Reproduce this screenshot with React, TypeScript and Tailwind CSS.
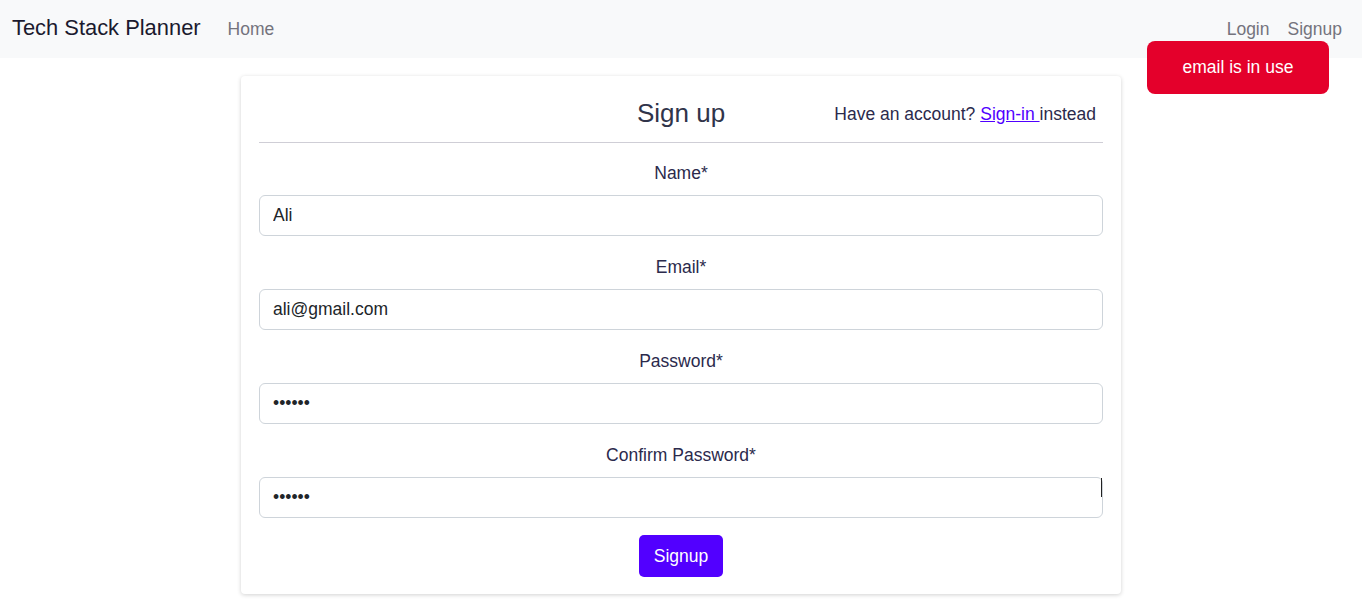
import React from 'react';

const font = { fontFamily: '"Liberation Sans", Arial, sans-serif' };

function Field({ label, type, value, caret }: { label: string; type: string; value: string; caret?: boolean }) {
  return (
    <div className="flex flex-col">
      <label className="text-center text-[17.5px] leading-[26px] text-[#2b2a4c] mt-[8px] mb-[9px]">{label}</label>
      <div className="relative">
        <input
          type={type}
          defaultValue={value}
          className="w-full h-[41px] rounded-[6px] border border-[#ced4da] bg-white px-[13px] text-[17.5px] text-[#212529] outline-none"
          style={font}
        />
        {caret && <div className="absolute right-[1px] top-[1px] h-[19px] w-[1px] bg-[#222]" />}
      </div>
    </div>
  );
}

export default function App() {
  return (
    <div className="min-h-screen bg-white" style={font}>
      <nav className="h-[58px] bg-[#f8f9fa] flex items-center pl-[12px] pr-[20px]">
        <span className="text-[21.9px] text-[#1b1a2e] mr-[27px] -mt-[2px]">Tech Stack Planner</span>
        <a className="text-[17.5px] text-[#74737d]">Home</a>
        <div className="ml-auto flex gap-[18px] text-[17.5px] text-[#74737d]">
          <a>Login</a>
          <a>Signup</a>
        </div>
      </nav>

      <div className="absolute left-[1147px] top-[41px] w-[182px] h-[53px] rounded-[8px] bg-[#e4002b] text-white text-[17.5px] flex items-center justify-center">
        email is in use
      </div>

      <main className="flex justify-center pt-[18px]">
        <div className="w-[880px] bg-white rounded-[4px] shadow-[0_1px_4px_rgba(0,0,0,0.18)] px-[18px] pt-[18px] pb-[17px]">
          <div className="grid grid-cols-[1fr_auto_1fr] items-center h-[38px] mb-[10px]">
            <div />
            <h4 className="text-[26px] text-[#30344a]">Sign up</h4>
            <div className="justify-self-end pr-[7px] text-[17.5px] text-[#2b2a4c] pt-[2px]">
              Have an account? <a className="text-[#5000ff] underline">Sign-in </a>instead
            </div>
          </div>
          <hr className="border-t border-[#cfced6] mb-[9px]" />
          <div className="flex flex-col gap-[10px]">
            <Field label="Name*" type="text" value="Ali" />
            <Field label="Email*" type="email" value="ali@gmail.com" />
            <Field label="Password*" type="password" value="123456" />
            <Field label="Confirm Password*" type="password" value="123456" caret />
          </div>
          <div className="flex justify-center mt-[17px]">
            <button className="h-[42px] w-[84px] rounded-[5px] bg-[#5200ff] text-white text-[17.5px]">Signup</button>
          </div>
        </div>
      </main>
    </div>
  );
}
